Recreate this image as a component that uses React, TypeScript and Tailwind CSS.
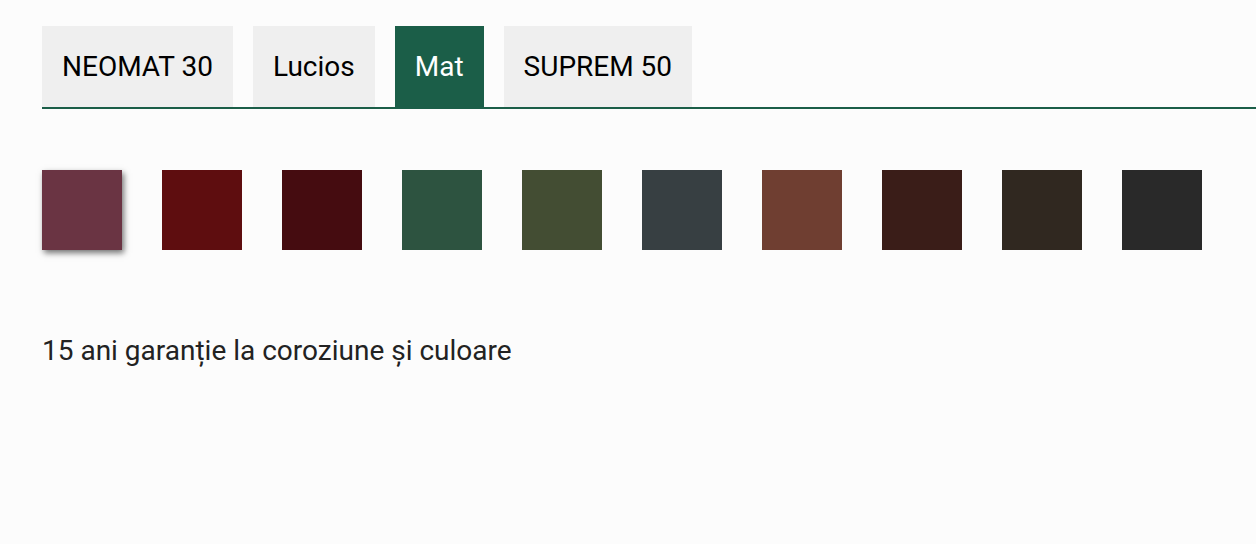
import { useState } from 'react';

const tabs = ['NEOMAT 30', 'Lucios', 'Mat', 'SUPREM 50'];

const swatches = [
  '#6a3443',
  '#5e0d0f',
  '#450c10',
  '#2d5340',
  '#434d33',
  '#373f42',
  '#6f3e31',
  '#3a1d18',
  '#302820',
  '#292929',
];

export default function App() {
  const [active, setActive] = useState('Mat');
  const [selected, setSelected] = useState(0);

  return (
    <div
      className="min-h-[544px] w-full bg-[#fcfcfc] pl-[42px] pt-[26px] text-[#1f1f1f]"
      style={{ fontFamily: 'Roboto, "Noto Sans", sans-serif' }}
    >
      {/* Tabs */}
      <div className="flex gap-5 border-b-2 border-[#1b5e48]">
        {tabs.map((t) => (
          <button
            key={t}
            onClick={() => setActive(t)}
            className={`h-[81px] px-5 text-[28px] leading-none ${
              active === t ? 'bg-[#1b5e48] text-white' : 'bg-[#efefef] text-black'
            }`}
          >
            {t}
          </button>
        ))}
      </div>

      {/* Colour swatches */}
      <div className="mt-[61px] flex gap-10">
        {swatches.map((c, i) => (
          <button
            key={c}
            onClick={() => setSelected(i)}
            className={`h-20 w-20 shrink-0 ${
              selected === i ? 'shadow-[2px_3px_6px_rgba(0,0,0,0.55)]' : ''
            }`}
            style={{ backgroundColor: c }}
          />
        ))}
      </div>

      <p className="mt-[85px] text-[28px] leading-[32px] text-[#222]">
        15 ani garanție la coroziune și culoare
      </p>
    </div>
  );
}
